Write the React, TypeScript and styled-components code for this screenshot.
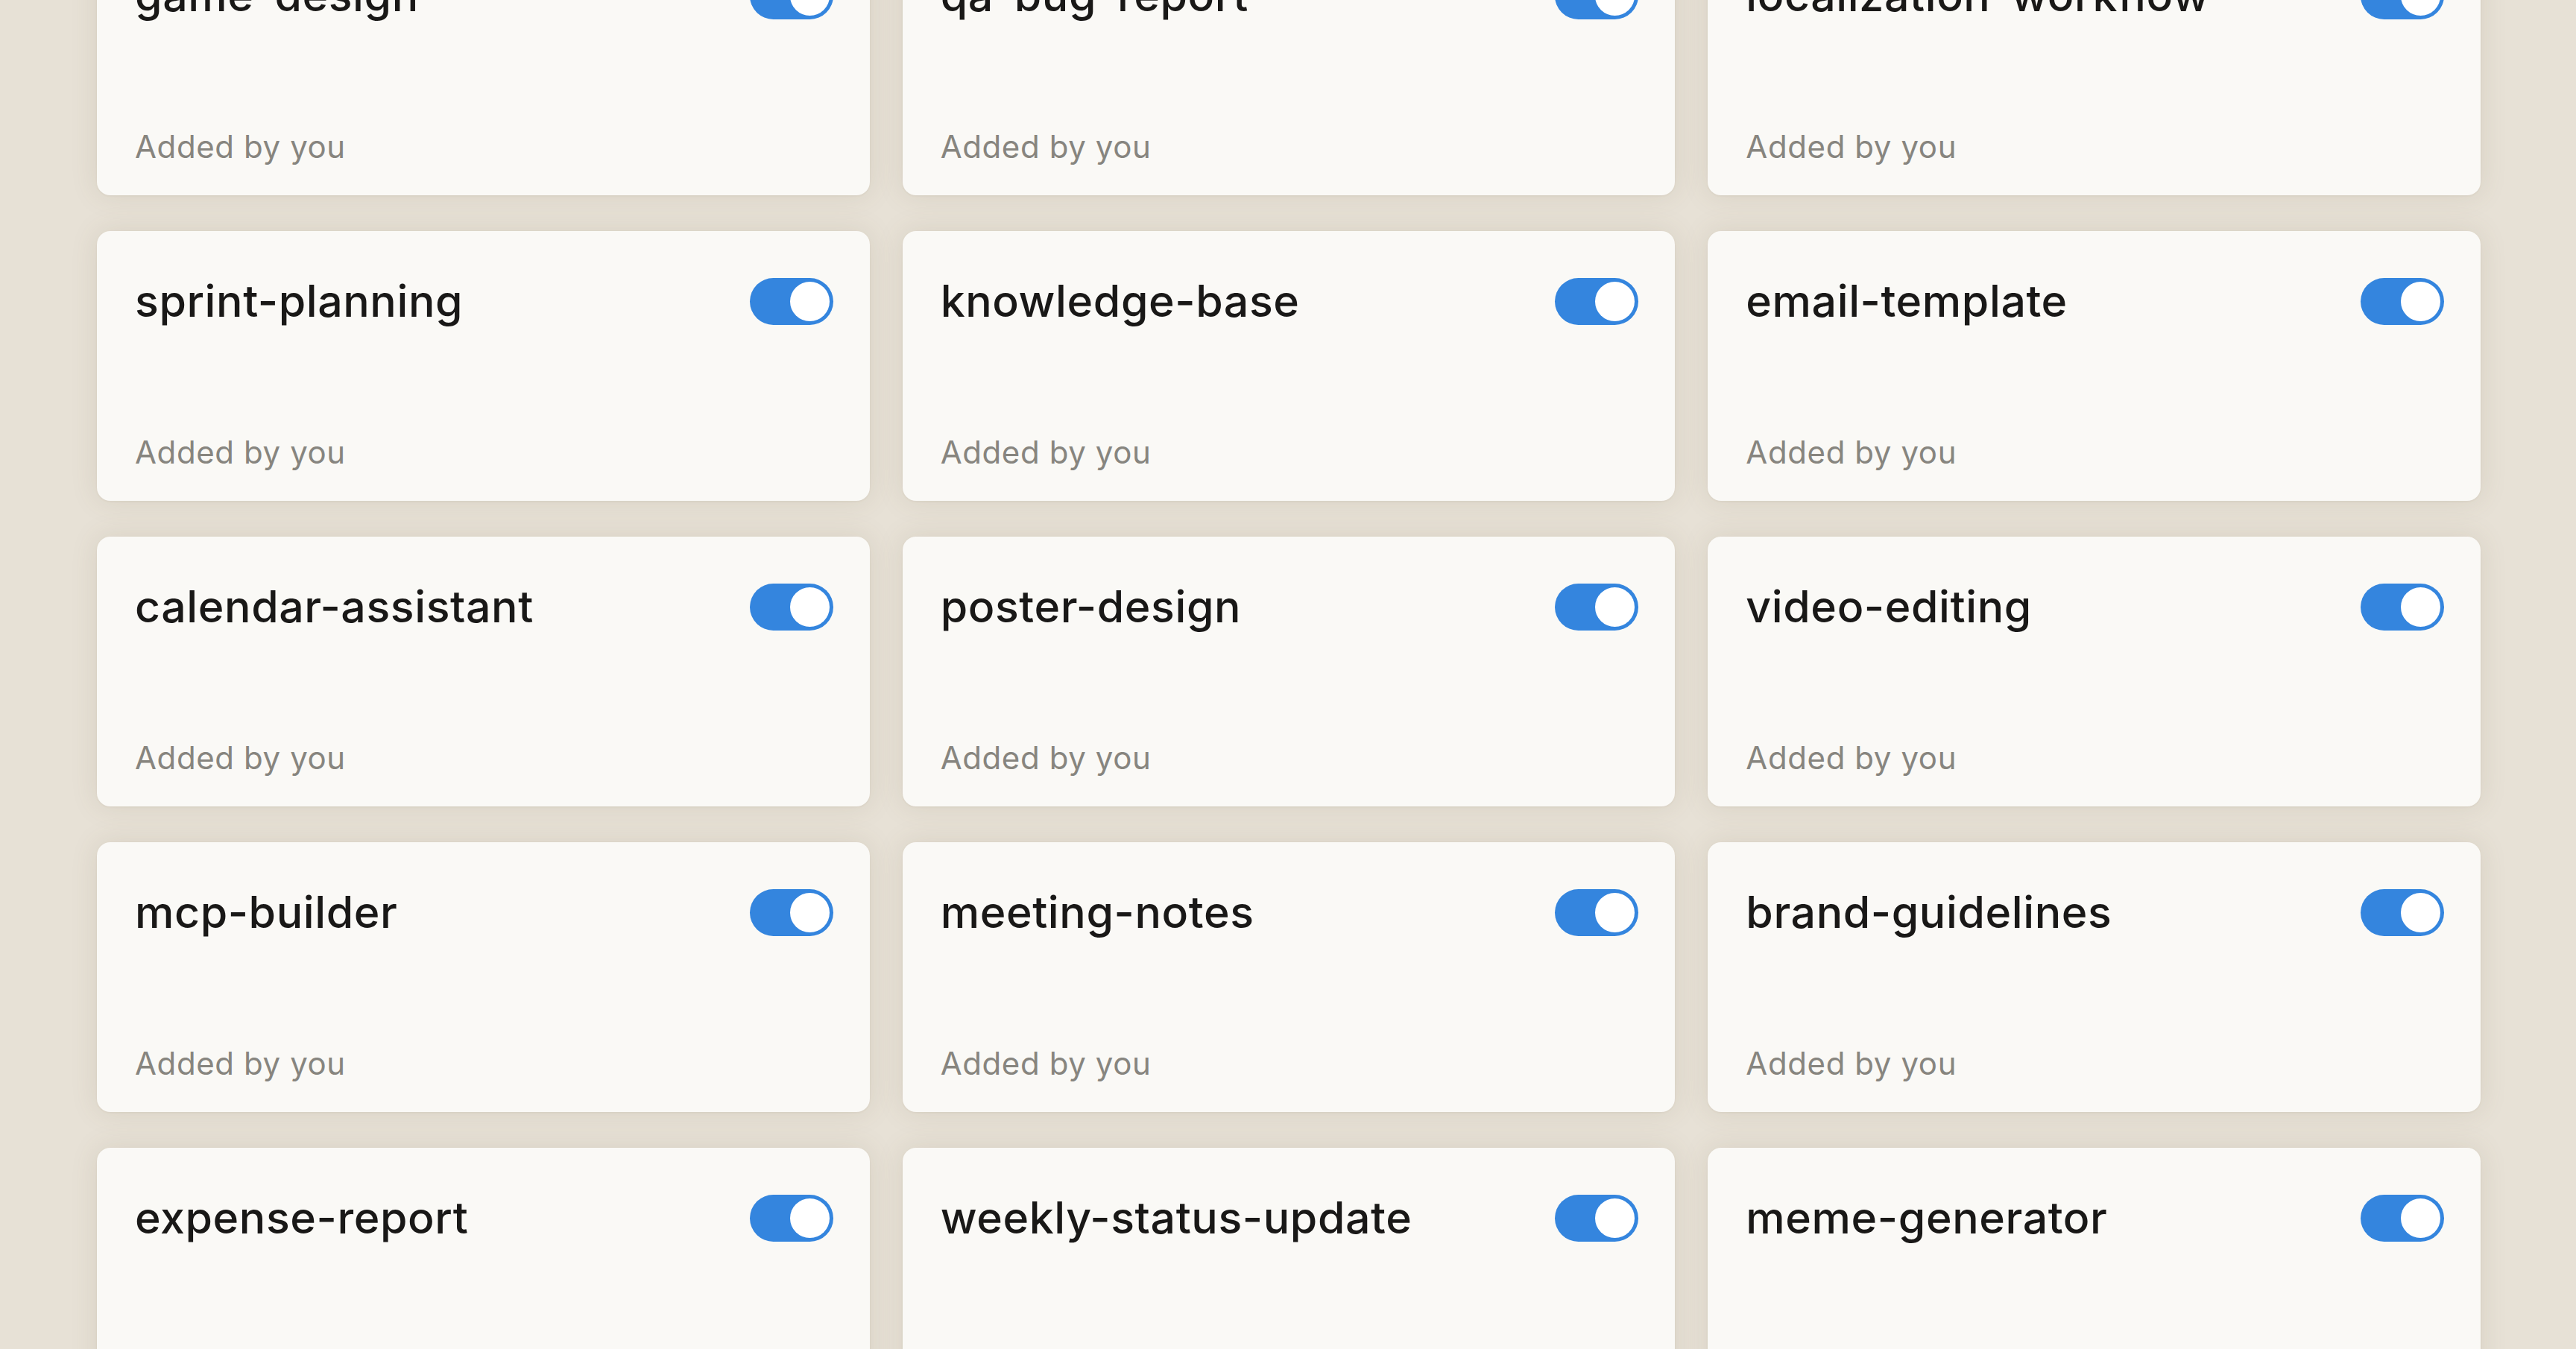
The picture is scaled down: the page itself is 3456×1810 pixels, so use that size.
import React, { useState } from 'react';
import styled, { createGlobalStyle } from 'styled-components';

const GlobalStyle = createGlobalStyle`
  html, body {
    margin: 0;
    padding: 0;
    background: #e7e1d6;
    font-family: Inter, "Noto Sans", "Liberation Sans", sans-serif;
    -webkit-font-smoothing: antialiased;
  }
  body {
    overflow: hidden;
  }
`;

const Viewport = styled.div`
  width: 3456px;
  height: 1810px;
  overflow: hidden;
  box-sizing: border-box;
  padding: 0 128px 0 130px;
  background: #e7e1d6;
`;

const Grid = styled.div`
  display: grid;
  grid-template-columns: repeat(3, 1fr);
  column-gap: 44px;
  row-gap: 48px;
  margin-top: -100px;
`;

const Card = styled.div`
  height: 362px;
  box-sizing: border-box;
  padding: 60px 49px 40px 51px;
  background: #faf9f6;
  border-radius: 18px;
  box-shadow: 0 0 36px rgba(110, 90, 60, 0.13), 0 1px 3px rgba(80, 60, 30, 0.06);
  display: flex;
  flex-direction: column;
  justify-content: space-between;
`;

const CardHeader = styled.div`
  display: flex;
  align-items: center;
  justify-content: space-between;
  gap: 24px;
`;

const SkillName = styled.div`
  font-size: 59px;
  line-height: 68px;
  font-weight: 500;
  color: #191817;
  letter-spacing: 0.6px;
  white-space: nowrap;
`;

const Meta = styled.div`
  font-size: 42px;
  line-height: 51px;
  font-weight: 400;
  color: #87857f;
  letter-spacing: 0.6px;
`;

const Track = styled.button<{ $on: boolean }>`
  flex: none;
  width: 112px;
  height: 63px;
  padding: 5px;
  border: none;
  border-radius: 32px;
  background: ${({ $on }) => ($on ? '#3485de' : '#c9c4ba')};
  display: flex;
  align-items: center;
  justify-content: ${({ $on }) => ($on ? 'flex-end' : 'flex-start')};
  cursor: pointer;
  box-sizing: border-box;
`;

const Knob = styled.span`
  width: 53px;
  height: 53px;
  border-radius: 50%;
  background: #ffffff;
`;

const skills = [
  'game-design',
  'qa-bug-report',
  'localization-workflow',
  'sprint-planning',
  'knowledge-base',
  'email-template',
  'calendar-assistant',
  'poster-design',
  'video-editing',
  'mcp-builder',
  'meeting-notes',
  'brand-guidelines',
  'expense-report',
  'weekly-status-update',
  'meme-generator',
];

const SkillCard: React.FC<{ name: string }> = ({ name }) => {
  const [on, setOn] = useState(true);
  return (
    <Card>
      <CardHeader>
        <SkillName>{name}</SkillName>
        <Track $on={on} onClick={() => setOn(v => !v)} aria-pressed={on}>
          <Knob />
        </Track>
      </CardHeader>
      <Meta>Added by you</Meta>
    </Card>
  );
};

const App: React.FC = () => (
  <>
    <GlobalStyle />
    <Viewport>
      <Grid>
        {skills.map(name => (
          <SkillCard key={name} name={name} />
        ))}
      </Grid>
    </Viewport>
  </>
);

export default App;
